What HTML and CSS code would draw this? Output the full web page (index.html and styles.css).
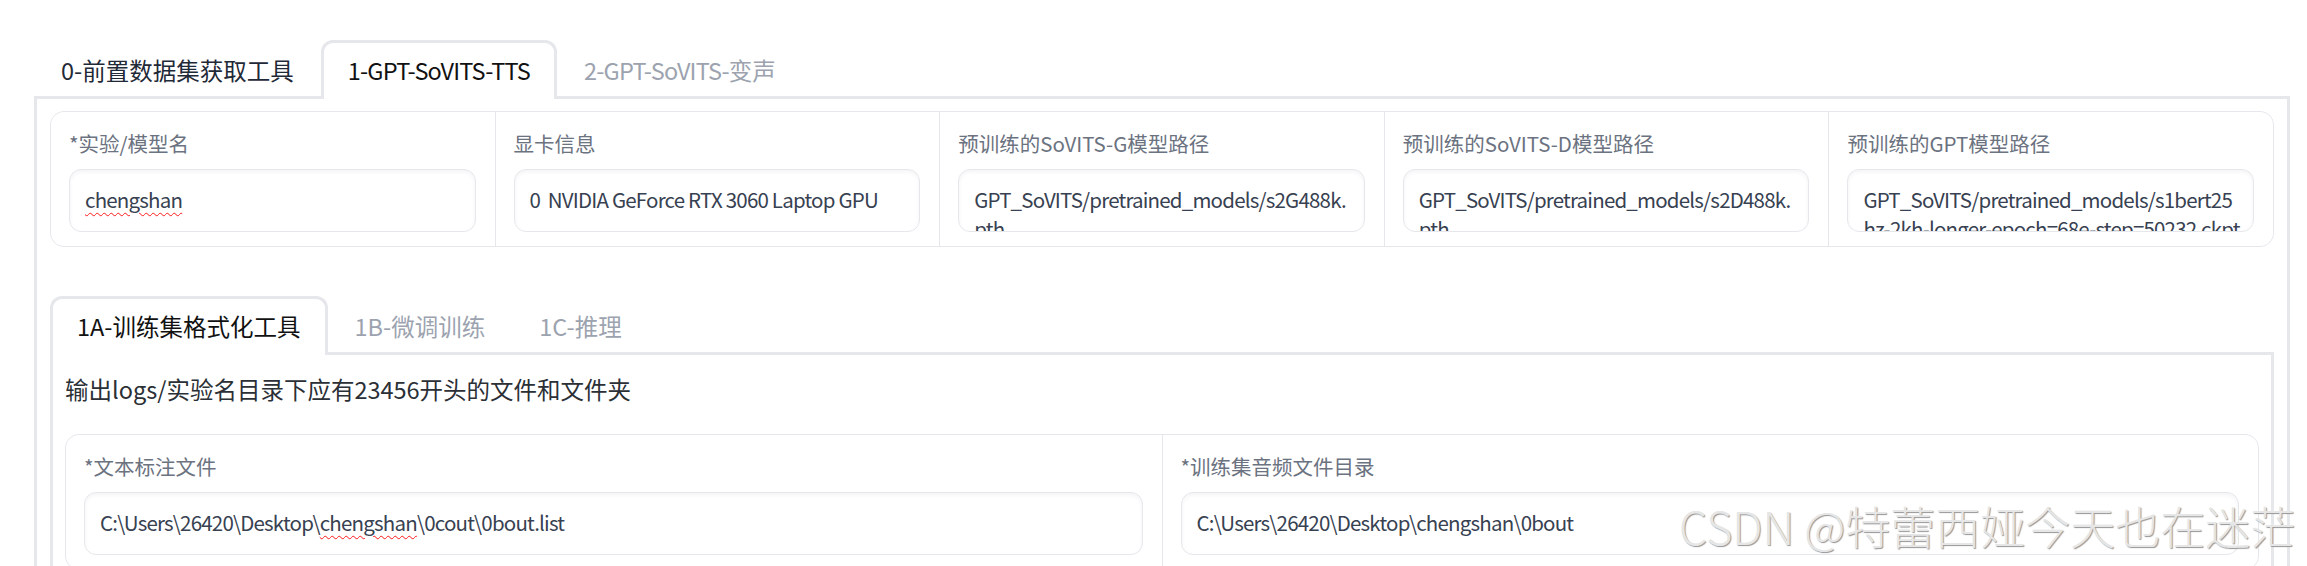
FILE: index.html
```
<!DOCTYPE html>
<html lang="zh-CN">
<head>
<meta charset="utf-8">
<title>GPT-SoVITS WebUI</title>
<link rel="stylesheet" href="styles.css">
</head>
<body>
<div class="app">
  <div class="tab-nav main-nav">
    <button class="tab hover">0-前置数据集获取工具</button>
    <button class="tab selected"><span class="latin">1-GPT-SoVITS-TTS</span></button>
    <button class="tab"><span class="latin">2-GPT-SoVITS-</span>变声</button>
  </div>
  <div class="tab-panel main-panel">
    <div class="form five">
      <div class="field">
        <div class="label">*实验/模型名</div>
        <div class="input"><span class="misspelt">chengshan</span></div>
      </div>
      <div class="field">
        <div class="label">显卡信息</div>
        <div class="input">0&nbsp;&nbsp;NVIDIA GeForce RTX 3060 Laptop GPU</div>
      </div>
      <div class="field">
        <div class="label">预训练的SoVITS-G模型路径</div>
        <div class="input">GPT_SoVITS/pretrained_models/s2G488k.<br>pth</div>
      </div>
      <div class="field">
        <div class="label">预训练的SoVITS-D模型路径</div>
        <div class="input">GPT_SoVITS/pretrained_models/s2D488k.<br>pth</div>
      </div>
      <div class="field">
        <div class="label">预训练的GPT模型路径</div>
        <div class="input">GPT_SoVITS/pretrained_models/s1bert25<br>hz-2kh-longer-epoch=68e-step=50232.ckpt</div>
      </div>
    </div>

    <div class="sub-tabs">
      <div class="tab-nav">
        <button class="tab selected">1A-训练集格式化工具</button>
        <button class="tab">1B-微调训练</button>
        <button class="tab">1C-推理</button>
      </div>
      <div class="tab-panel sub-panel">
        <p class="prose">输出logs/实验名目录下应有23456开头的文件和文件夹</p>
        <div class="form two">
          <div class="field">
            <div class="label">*文本标注文件</div>
            <div class="input">C:\Users\26420\Desktop\<span class="misspelt">chengshan</span>\0cout\0bout.list</div>
          </div>
          <div class="field">
            <div class="label">*训练集音频文件目录</div>
            <div class="input">C:\Users\26420\Desktop\chengshan\0bout</div>
          </div>
        </div>
      </div>
    </div>
  </div>
</div>
<div class="watermark">CSDN @特蕾西娅今天也在迷茫</div>
</body>
</html>
```

FILE: styles.css
```
html, body {
  margin: 0;
  padding: 0;
  background: #ffffff;
  overflow: hidden;
}

body {
  position: relative;
  width: 2307px;
  height: 566px;
  font-family: "Noto Sans CJK SC", "Noto Sans", sans-serif;
  color: #1f2937;
}

.app {
  padding-top: 40px;
  padding-left: 34px;
}

.tab-nav {
  display: flex;
}

.tab {
  position: relative;
  box-sizing: border-box;
  height: 59px;
  margin: 0 0 -3px 0;
  padding: 0 24px 2px;
  border: 3px solid transparent;
  border-bottom: 0;
  background: transparent;
  font-family: inherit;
  font-size: 23.5px;
  line-height: 32px;
  color: #9ca3af;
  display: flex;
  align-items: center;
  white-space: nowrap;
  cursor: pointer;
}

.tab .latin {
  letter-spacing: -0.8px;
}

.tab.hover {
  color: #1f2937;
}

.tab.selected {
  z-index: 1;
  background: #ffffff;
  border-color: #e5e7eb;
  border-radius: 12px 12px 0 0;
  color: #111111;
}

.tab-panel {
  border: 3px solid #e5e7eb;
  background: #ffffff;
}

.main-panel {
  width: 2256px;
  box-sizing: border-box;
  height: 600px;
  padding: 12px 13px;
}

.form {
  display: grid;
  gap: 1px;
  background: #e5e7eb;
  border: 1px solid #e5e7eb;
  border-radius: 14px;
  overflow: hidden;
}

.form.five {
  grid-template-columns: repeat(5, 1fr);
}

.form.two {
  grid-template-columns: repeat(2, 1fr);
}

.field {
  background: #ffffff;
  padding: 17px 19px 14px 18px;
  min-width: 0;
}

.label {
  font-size: 20.5px;
  line-height: 28px;
  color: #6b7280;
  margin-bottom: 12px;
  white-space: nowrap;
}

.input {
  box-sizing: border-box;
  height: 63px;
  padding: 15px 15px 0;
  border: 1px solid #e5e7eb;
  border-radius: 12px;
  background: #ffffff;
  box-shadow: inset 0 2px 4px rgba(0, 0, 0, 0.05);
  font-size: 20.5px;
  line-height: 29px;
  letter-spacing: -0.8px;
  color: #374151;
  overflow: hidden;
  white-space: nowrap;
}

.misspelt {
  text-decoration: underline wavy #ff1a1a;
  text-decoration-thickness: 1px;
  text-underline-offset: 4px;
}

.sub-tabs {
  margin-top: 49px;
}

.sub-panel {
  padding: 17px 12px 40px;
}

.prose {
  margin: 0 0 28px;
  font-size: 23.5px;
  line-height: 34px;
  color: #2b2f36;
}

.watermark {
  position: absolute;
  left: 1679px;
  top: 500px;
  font-family: "Noto Sans CJK SC", sans-serif;
  font-weight: 300;
  font-size: 45px;
  line-height: 52px;
  color: #e6e6e6;
  text-shadow: 1px 1px 1px #959595;
  white-space: nowrap;
}
```
